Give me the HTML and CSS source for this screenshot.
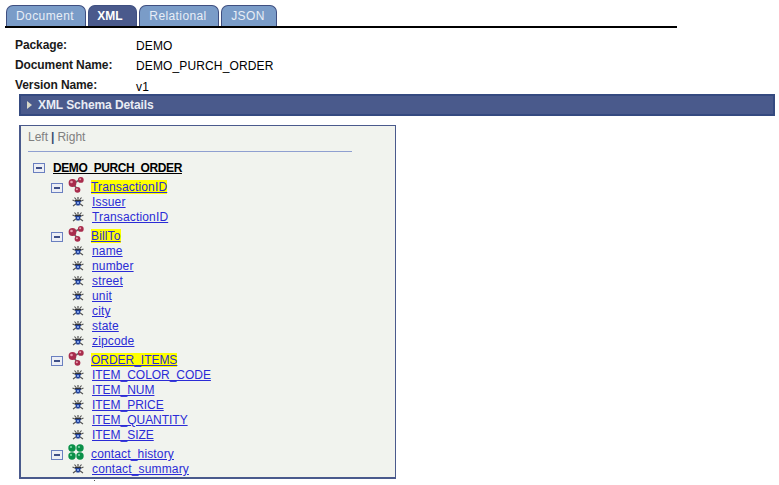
FILE: index.html
```html
<!DOCTYPE html>
<html lang="en">
<head>
<meta charset="utf-8">
<title>XML Schema Details</title>
<link rel="stylesheet" href="styles.css">
</head>
<body>
<svg class="defs" width="0" height="0" aria-hidden="true">
  <symbol id="collapse" viewBox="0 0 12 10">
    <rect x="0.5" y="0.5" width="11" height="9" fill="#eceef5" stroke="#6a7fc0"/>
    <rect x="3" y="4" width="6" height="2" fill="#3f4f88"/>
  </symbol>
  <symbol id="seq" viewBox="0 0 16 16">
    <path d="M5 6.5 L12.5 2.5 M5 6.5 L9.5 12.5" stroke="#666" stroke-width="1.6"/>
    <circle cx="4.5" cy="6" r="3.9" fill="#a82c4c"/>
    <circle cx="12.8" cy="2.9" r="2.9" fill="#a82c4c"/>
    <circle cx="9.5" cy="12.8" r="2.9" fill="#a82c4c"/>
    <circle cx="3.5" cy="5" r="1.3" fill="#e8a0b2"/>
    <circle cx="12.2" cy="2.3" r="1" fill="#e8a0b2"/>
    <circle cx="8.9" cy="12.2" r="1" fill="#e8a0b2"/>
  </symbol>
  <symbol id="all" viewBox="0 0 16 16">
    <g fill="#0a9048">
      <circle cx="4" cy="4" r="3.7"/><circle cx="12" cy="4" r="3.7"/>
      <circle cx="4" cy="12" r="3.7"/><circle cx="12" cy="12" r="3.7"/>
    </g>
    <g fill="#7fd8a6">
      <circle cx="3" cy="3" r="1.1"/><circle cx="11" cy="3" r="1.1"/>
      <circle cx="3" cy="11" r="1.1"/><circle cx="11" cy="11" r="1.1"/>
    </g>
  </symbol>
  <symbol id="leaf" viewBox="0 0 12 10">
    <path d="M0.5 3 L4 4.5 M11.5 3 L8 4.5 M1 9 L4.5 6.5 M11 9 L7.5 6.5 M6 0 V3 M2.5 0.5 L4.5 3 M9.5 0.5 L7.5 3" stroke="#555" stroke-width="1.2"/>
    <path d="M3 3.5 H9 L7.5 8.5 H4.5 Z" fill="#1f3f96"/>
    <rect x="3" y="3" width="6" height="1" fill="#333"/>
    <rect x="5" y="5" width="2" height="2" fill="#7f9fe8"/>
  </symbol>
</svg>

<nav class="tabs">
  <a class="tab tab-document">Document</a>
  <a class="tab tab-xml active">XML</a>
  <a class="tab tab-relational">Relational</a>
  <a class="tab tab-json">JSON</a>
</nav>

<dl class="info">
  <div class="info-row"><dt>Package:</dt><dd>DEMO</dd></div>
  <div class="info-row"><dt>Document Name:</dt><dd>DEMO_PURCH_ORDER</dd></div>
  <div class="info-row"><dt>Version Name:</dt><dd class="low">v1</dd></div>
</dl>

<div class="section-bar"><span class="arrow"></span>XML Schema Details</div>

<section class="panel">
  <div class="panel-links"><span>Left</span><b>|</b><span>Right</span></div>
  <div class="rule"></div>
  <div class="row root"><svg class="tg"><use href="#collapse"/></svg><a class="root-link">DEMO_PURCH_ORDER</a></div>

  <div class="row group"><svg class="tg"><use href="#collapse"/></svg><svg class="gi"><use href="#seq"/></svg><a class="hl">TransactionID</a></div>
  <div class="row leaf"><svg class="li"><use href="#leaf"/></svg><a>Issuer</a></div>
  <div class="row leaf"><svg class="li"><use href="#leaf"/></svg><a>TransactionID</a></div>

  <div class="row group"><svg class="tg"><use href="#collapse"/></svg><svg class="gi"><use href="#seq"/></svg><a class="hl">BillTo</a></div>
  <div class="row leaf"><svg class="li"><use href="#leaf"/></svg><a>name</a></div>
  <div class="row leaf"><svg class="li"><use href="#leaf"/></svg><a>number</a></div>
  <div class="row leaf"><svg class="li"><use href="#leaf"/></svg><a>street</a></div>
  <div class="row leaf"><svg class="li"><use href="#leaf"/></svg><a>unit</a></div>
  <div class="row leaf"><svg class="li"><use href="#leaf"/></svg><a>city</a></div>
  <div class="row leaf"><svg class="li"><use href="#leaf"/></svg><a>state</a></div>
  <div class="row leaf"><svg class="li"><use href="#leaf"/></svg><a>zipcode</a></div>

  <div class="row group"><svg class="tg"><use href="#collapse"/></svg><svg class="gi"><use href="#seq"/></svg><a class="hl caps">ORDER_ITEMS</a></div>
  <div class="row leaf"><svg class="li"><use href="#leaf"/></svg><a class="caps">ITEM_COLOR_CODE</a></div>
  <div class="row leaf"><svg class="li"><use href="#leaf"/></svg><a class="caps">ITEM_NUM</a></div>
  <div class="row leaf"><svg class="li"><use href="#leaf"/></svg><a class="caps">ITEM_PRICE</a></div>
  <div class="row leaf"><svg class="li"><use href="#leaf"/></svg><a class="caps">ITEM_QUANTITY</a></div>
  <div class="row leaf"><svg class="li"><use href="#leaf"/></svg><a class="caps">ITEM_SIZE</a></div>

  <div class="row group"><svg class="tg"><use href="#collapse"/></svg><svg class="gi"><use href="#all"/></svg><a>contact_history</a></div>
  <div class="row leaf"><svg class="li"><use href="#leaf"/></svg><a>contact_summary</a></div>
</section>
<span class="speck"></span>
</body>
</html>
```
FILE: styles.css
```css
html, body { margin: 0; padding: 0; background: #fff; }
body {
  width: 779px; height: 485px; overflow: hidden;
  font: 12px/15px "Liberation Sans", Arial, sans-serif;
  color: #000;
  position: relative;
}
.defs { position: absolute; }

.tabs {
  display: flex; gap: 2px;
  margin: 5px 0 0 5px; width: 671px; height: 21px;
  border-bottom: 2px solid #000;
  padding-left: 1px; box-sizing: content-box;
}
.tab {
  height: 21px; box-sizing: border-box;
  background: #7a9cc8;
  border: 1px solid #3f4f80; border-bottom: 0;
  border-radius: 7px 7px 0 0;
  color: #e8eef6; letter-spacing: .4px;
  text-align: center; line-height: 21px;
}
.tab-document { width: 80px; padding-right: 2px; }
.tab-xml { width: 49px; padding-right: 5px; }
.tab-relational { width: 80px; padding-right: 2px; }
.tab-json { width: 56px; padding-right: 2px; }
.tab.active { background: #4a5a8c; color: #fff; font-weight: bold; letter-spacing: 0; }

.info { margin: 0; padding: 9px 0 0 15px; }
.info-row { display: flex; height: 20px; line-height: 17px; }
.info dt { width: 121px; font-weight: bold; color: #1a1a1a; letter-spacing: -.1px; }
.info dd { margin: 0; line-height: 19px; letter-spacing: .13px; }
.info dd.low { line-height: 20px; }

.section-bar {
  margin: -3px 0 0 19px; width: 756px; height: 22px; box-sizing: border-box;
  background: #4a5a8c; border: 2px solid #354a80;
  color: #e9ecf4; font-weight: bold; letter-spacing: -.08px;
  display: flex; align-items: center;
}
.arrow {
  width: 0; height: 0; margin: 0 6px 0 6px;
  border-left: 5px solid #d8d8c8;
  border-top: 4px solid transparent; border-bottom: 4px solid transparent;
}

.panel {
  margin: 9px 0 0 19px; width: 377px; height: 354px; box-sizing: border-box;
  background: #f1f3ee; border: 1px solid #4a5a8c; border-width: 1px 1px 2px 2px;
  padding: 4px 0 0 7px; overflow: hidden;
}
.panel-links { color: #808080; line-height: 15px; height: 15px; }
.panel-links b { color: #3a4a70; margin: 0 3px; font-weight: bold; }
.rule { width: 324px; height: 1px; background: #8f9fd0; margin: 6px 0 0; }

.row { display: flex; align-items: center; height: 15px; white-space: nowrap; }
.row a { color: #2b2bd6; text-decoration: underline; letter-spacing: .15px; }
.row a.caps { letter-spacing: -.03px; }
.row svg { flex: none; }
.root { height: 15px; margin-top: 9px; padding-left: 5px; }
.root .tg { margin-right: 8px; }
.row a.root-link { color: #000; font-weight: bold; letter-spacing: -.4px; }
.group { height: 19px; padding-left: 23px; margin-top: 0; align-items: flex-end; }
.group a { line-height: 14px; margin-bottom: 1px; }
.tg { width: 12px; height: 10px; margin-bottom: 2px; }
.gi { width: 16px; height: 16px; margin: 0 7px 2px 5px; }
.hl { background: #ffff00; }
.leaf { padding-left: 44px; }
.li { width: 12px; height: 10px; margin: 0 8px 2px 0; }

.speck { position: absolute; left: 94px; top: 480px; width: 1px; height: 1px; background: #555; }
```
